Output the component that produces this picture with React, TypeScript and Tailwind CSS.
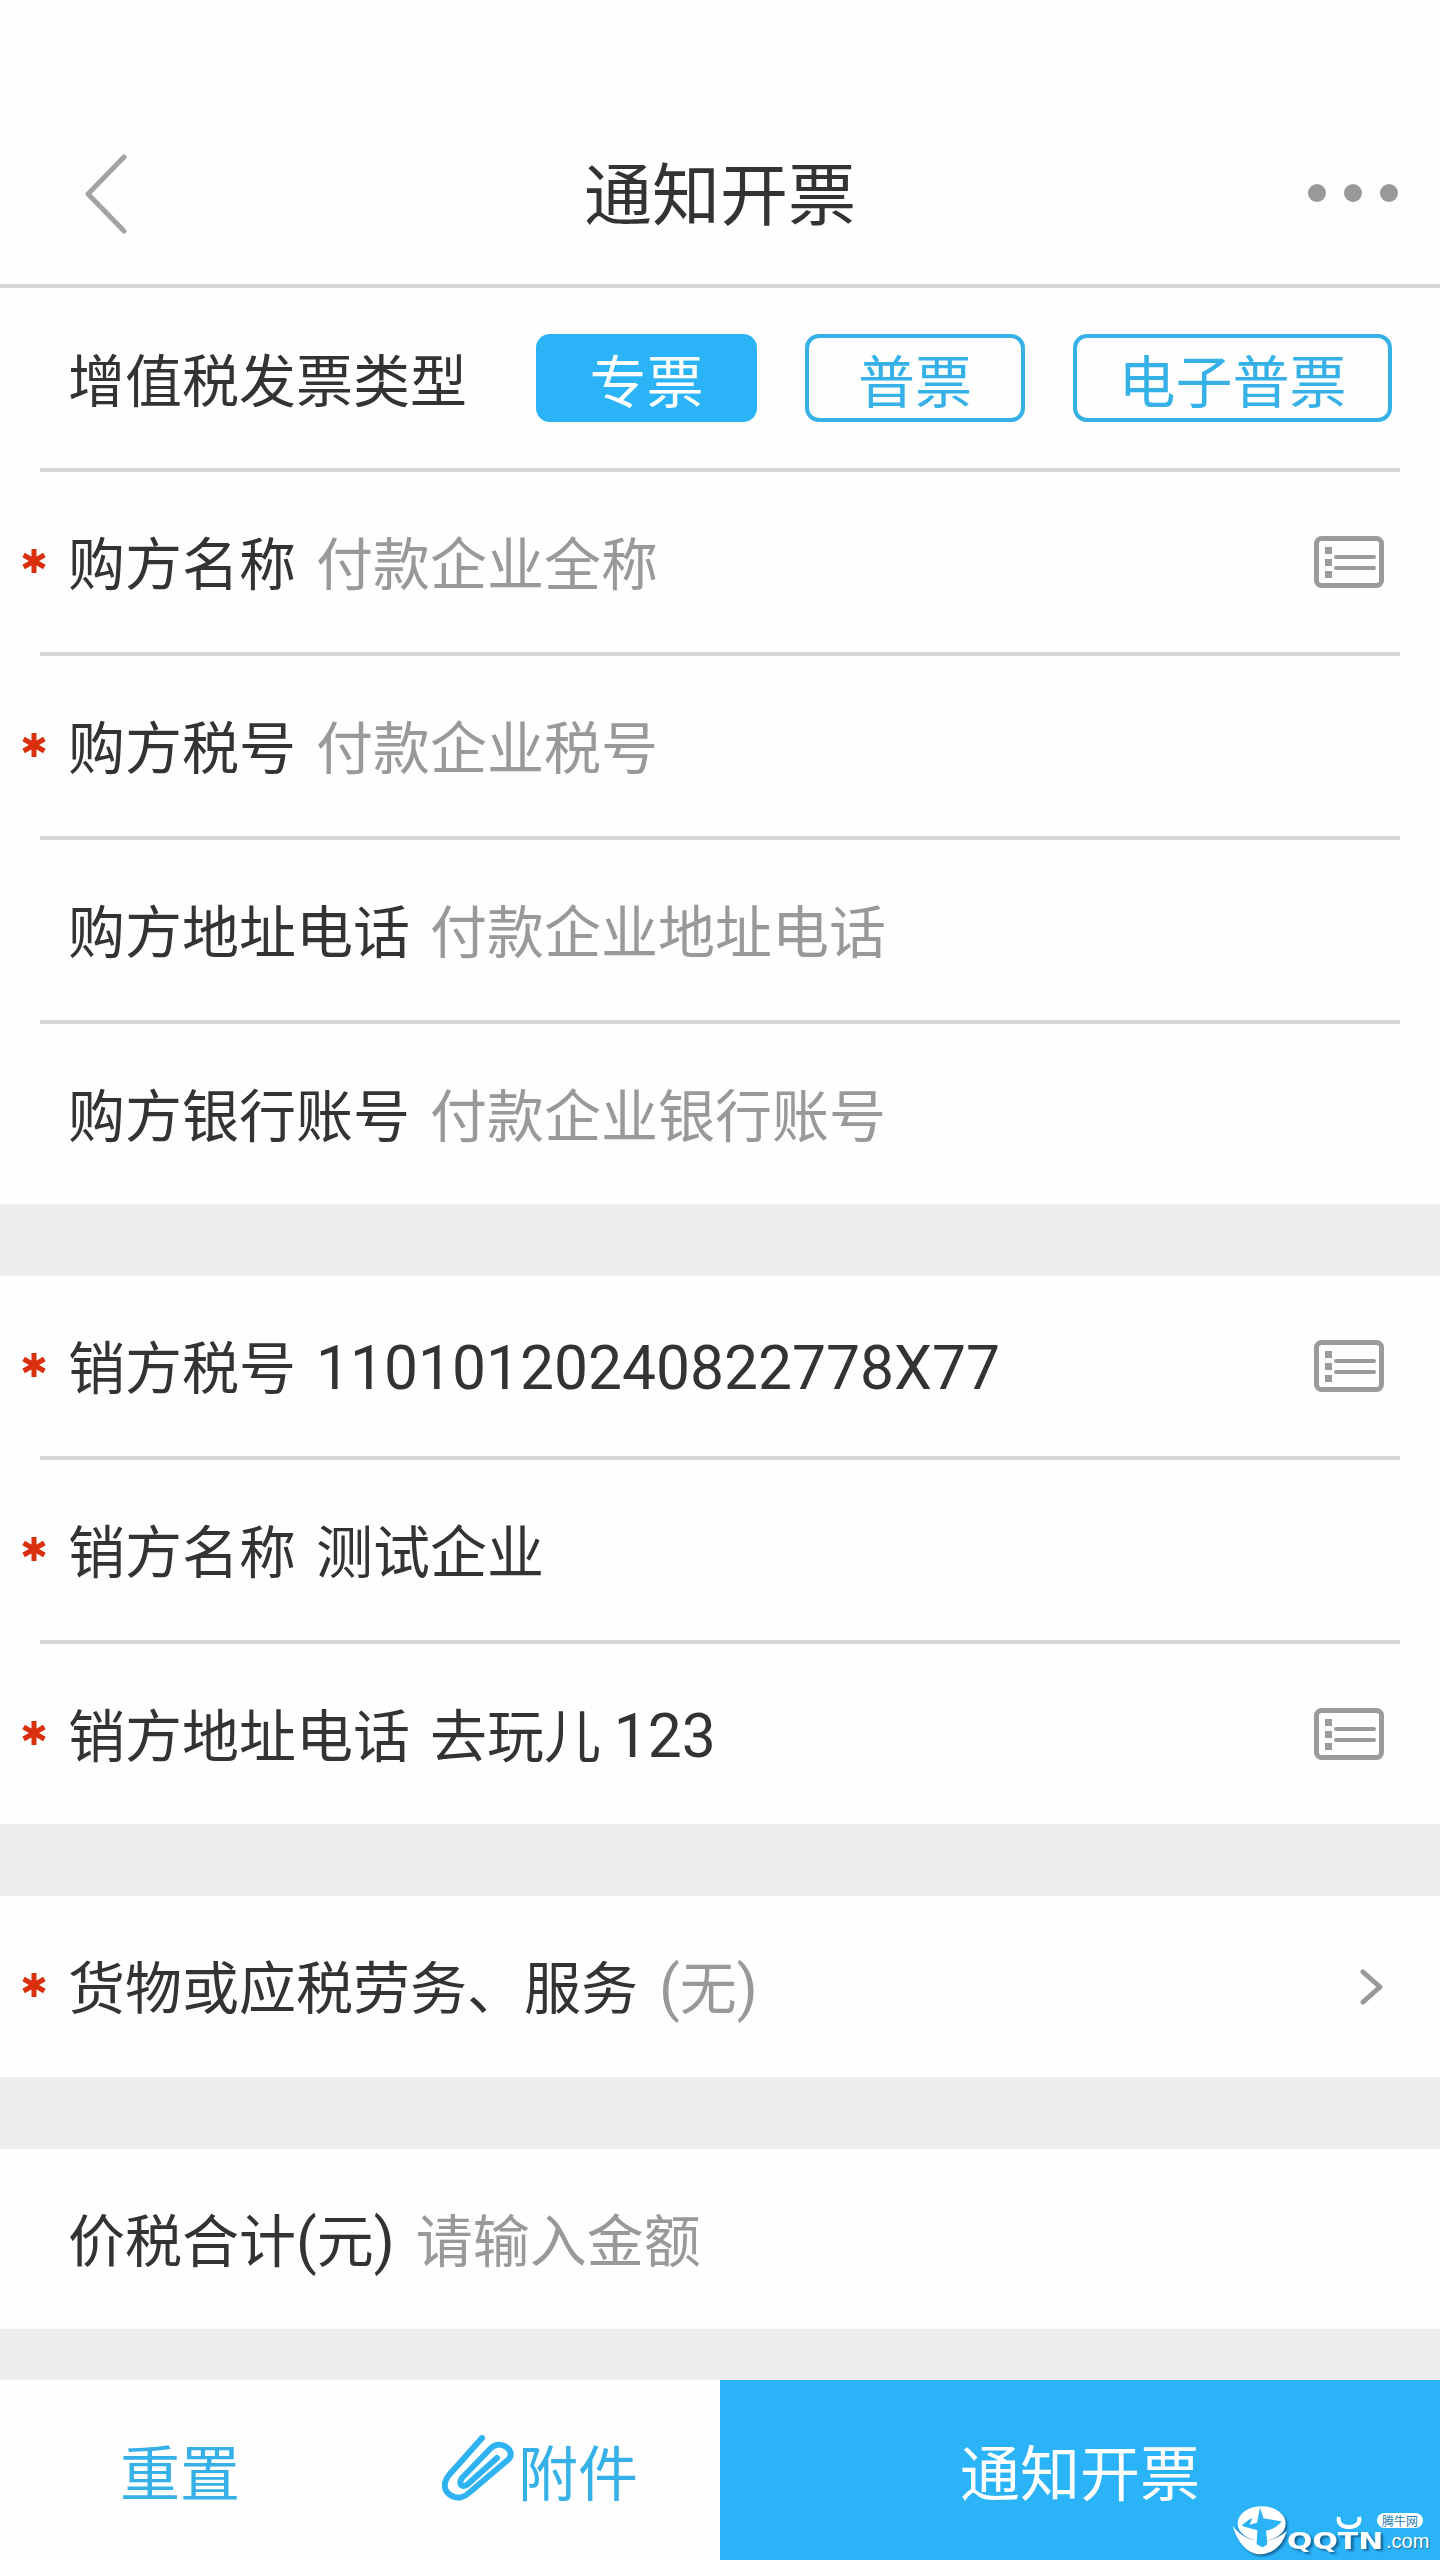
import React from 'react';

type Field = {
  label: string;
  value: React.ReactNode;
  required?: boolean;
  placeholder?: boolean;
  list?: boolean;
};

// digits and brackets come out larger and narrower than the chinese text
const Latin = ({ children }: { children: React.ReactNode }) => (
  <span className="text-[60.5px] leading-none [font-family:Roboto,sans-serif]">{children}</span>
);

const buyerFields: Field[] = [
  { label: '购方名称', value: '付款企业全称', required: true, placeholder: true, list: true },
  { label: '购方税号', value: '付款企业税号', required: true, placeholder: true },
  { label: '购方地址电话', value: '付款企业地址电话', placeholder: true },
  { label: '购方银行账号', value: '付款企业银行账号', placeholder: true },
];

const sellerFields: Field[] = [
  { label: '销方税号', value: <Latin>11010120240822778X77</Latin>, required: true, list: true },
  { label: '销方名称', value: '测试企业', required: true },
  { label: '销方地址电话', value: <>去玩儿 <Latin>123</Latin></>, required: true, list: true },
];

const ListIcon = () => (
  <svg width="70" height="52" viewBox="0 0 70 52" fill="none" stroke="#9b9b9b" className="mt-[3px]">
    <rect x="2.5" y="2.5" width="65" height="47" rx="5" strokeWidth="5" />
    <path d="M11 11h7v7h-7zM11 23h7v7h-7zM11 35h7v7h-7z" fill="#9b9b9b" stroke="none" />
    <path d="M22 21h38M22 32h38" strokeWidth="4" strokeLinecap="round" />
  </svg>
);

const Star = () => (
  <span className="flex w-[68px] shrink-0 justify-center">
    <svg width="26" height="24" viewBox="0 0 26 24" stroke="#d9300f" strokeWidth="5">
      <path d="M13 0v24M2.6 6l20.8 12M23.4 6L2.6 18" />
    </svg>
  </span>
);

const Row = ({ field }: { field: Field }) => (
  <div className="flex h-[180px] items-center pb-[3px] pr-[56px] text-[57px]">
    {field.required ? <Star /> : <span className="w-[68px] shrink-0" />}
    <span className="text-[#333333]">{field.label}</span>
    <span className={`ml-[20px] flex-1 ${field.placeholder ? 'text-[#999999]' : 'text-[#333333]'}`}>
      {field.value}
    </span>
    {field.list && <ListIcon />}
  </div>
);

const Divider = () => <div className="mx-[40px] h-[4px] bg-[#d6d6d6]" />;

const Section = ({ fields }: { fields: Field[] }) => (
  <div className="bg-[#fefefe]">
    {fields.map((field, index) => (
      <div key={field.label}>
        {index > 0 && <Divider />}
        <Row field={field} />
      </div>
    ))}
  </div>
);

const Watermark = () => (
  <div className="absolute bottom-[6px] right-[8px] h-[50px] w-[204px] text-white">
    <svg width="60" height="52" viewBox="20 20 180 155" className="absolute left-[2px] top-0 drop-shadow-[2px_2px_1px_#14689a]">
      <ellipse cx="115" cy="78" rx="72" ry="52" fill="#ffffff" />
      <path d="M28 85c22 30 52 45 87 45s60-15 75-30c-10 40-40 72-85 70-35-2-65-40-77-85z" fill="#ffffff" />
      <path
        d="M110 30l10 32 55 10c-15 18-35 26-47 28l4 40-14 10-18-10 2-42c-12-3-32-8-47-13 10-12 22-20 32-23l-8 20 22-6z"
        fill="#2bb3f8"
      />
    </svg>
    <span className="absolute left-[59px] top-[24px] origin-left scale-x-[1.3] text-[23px] font-bold leading-[26px] [font-family:'DejaVu_Sans',sans-serif] [text-shadow:2px_2px_2px_#14689a]">
      QQTN
    </span>
    <span className="absolute left-[158px] top-[25px] text-[20px] leading-[24px] [font-family:'Liberation_Sans',sans-serif] [text-shadow:1px_1px_1px_#14689a]">
      .com
    </span>
    <span className="absolute left-[149px] top-[9px] h-[15px] w-[46px] rounded-[8px] bg-white text-center text-[12px] leading-[15px] text-[#2a7fb0]">
      腾牛网
    </span>
    <svg width="26" height="14" viewBox="0 0 26 14" fill="none" stroke="#ffffff" strokeWidth="4" className="absolute left-[108px] top-[12px]">
      <path d="M3 1c-2 7 4 10 10 10s12-3 10-10" />
    </svg>
  </div>
);

const App: React.FC = () => {
  return (
    <div className="flex h-[2560px] w-[1440px] flex-col overflow-hidden bg-[#eeeeee] [font-family:'Noto_Sans_CJK_SC','Noto_Sans',sans-serif]">
      <header className="grid h-[284px] grid-cols-[1fr_auto_1fr] items-center bg-[#fefefe] px-[50px] pt-[104px]">
        <svg width="44" height="80" viewBox="0 0 44 80" fill="none" stroke="#a3a3a3" strokeWidth="5" strokeLinecap="round" strokeLinejoin="round" className="ml-[35px]">
          <path d="M39 3L3 40l36 37" />
        </svg>
        <h1 className="mb-[6px] text-[68px] font-normal text-[#333333]">通知开票</h1>
        <div className="mb-[2px] mr-[-8px] flex justify-end gap-[18px]">
          <span className="h-[18px] w-[18px] rounded-full bg-[#999999]" />
          <span className="h-[18px] w-[18px] rounded-full bg-[#999999]" />
          <span className="h-[18px] w-[18px] rounded-full bg-[#999999]" />
        </div>
      </header>
      <div className="h-[4px] bg-[#d6d6d6]" />

      <div className="flex h-[180px] items-center bg-[#fefefe] pl-[68px] pr-[48px] text-[57px]">
        <span className="flex-1 text-[#333333]">增值税发票类型</span>
        <div className="flex gap-[48px] leading-none">
          <span className="flex h-[88px] w-[221px] items-center justify-center rounded-[14px] bg-[#2bb3f8] text-white">专票</span>
          <span className="flex h-[88px] w-[220px] items-center justify-center rounded-[14px] border-[4px] border-[#36b1e8] text-[#36b1e8]">普票</span>
          <span className="flex h-[88px] w-[319px] items-center justify-center rounded-[14px] border-[4px] border-[#36b1e8] text-[#36b1e8]">电子普票</span>
        </div>
      </div>
      <div className="bg-[#fefefe]">
        <Divider />
      </div>
      <Section fields={buyerFields} />

      <div className="mt-[72px]">
        <Section fields={sellerFields} />
      </div>

      <div className="mt-[72px] flex h-[181px] items-center bg-[#fefefe] pb-[3px] pr-[56px] text-[57px]">
        <Star />
        <span className="flex-1 text-[#333333]">
          货物或应税劳务、服务
          <span className="ml-[21px] text-[#999999]"><Latin>(</Latin>无<Latin>)</Latin></span>
        </span>
        <svg width="24" height="36" viewBox="0 0 24 36" fill="none" stroke="#999999" strokeWidth="5" strokeLinecap="round" strokeLinejoin="round" className="mt-[3px]">
          <path d="M3 3l17 15L3 33" />
        </svg>
      </div>

      <div className="mt-[72px] flex h-[180px] items-center bg-[#fefefe] pb-[3px] pl-[68px] text-[57px]">
        <span className="text-[#333333]">价税合计<Latin>(</Latin>元<Latin>)</Latin></span>
        <span className="ml-[21px] text-[#999999]">请输入金额</span>
      </div>

      <footer className="relative mt-auto grid h-[180px] grid-cols-2 bg-[#fefefe] text-[60px]">
        <div className="grid grid-cols-2 items-center text-center text-[#36b1e8]">
          <span>重置</span>
          <span className="flex items-center justify-center gap-[4px]">
            <svg width="72" height="70" viewBox="13 12 72 70" fill="none" stroke="#2fb2f2" strokeWidth="6" strokeLinecap="round" strokeLinejoin="round">
              <path d="M53 15L20 52c-7 9-5 17 3 21 6 3 13 1 18-4L80 36c7-9-9-20-18-11L33 55c-5 7 2 11 7 5l28-25" />
            </svg>
            附件
          </span>
        </div>
        <div className="relative flex items-center justify-center bg-[#2bb3f8] text-white">
          通知开票
          <Watermark />
        </div>
      </footer>
    </div>
  );
};

export default App;
